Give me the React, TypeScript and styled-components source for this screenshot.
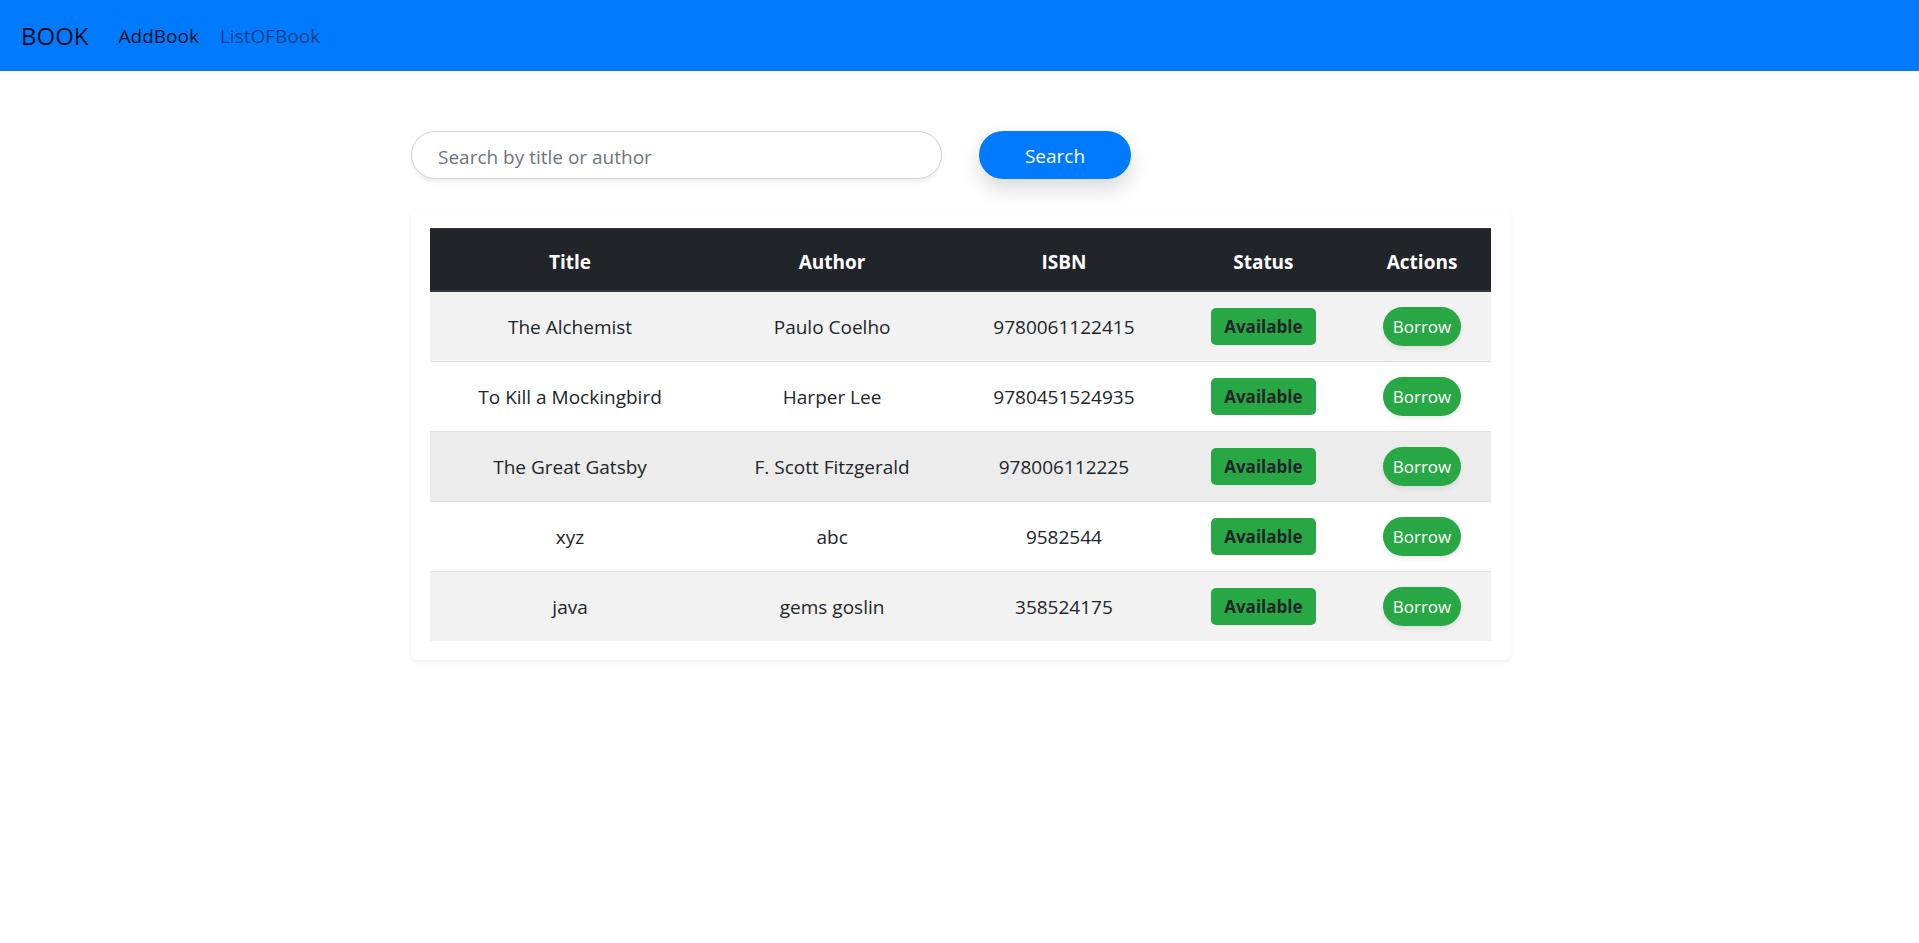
import React, { useState } from 'react';
import styled, { createGlobalStyle } from 'styled-components';

const GlobalStyle = createGlobalStyle`
  *, *::before, *::after { box-sizing: border-box; }
  body {
    margin: 0;
    background: #fff;
    color: #212529;
    font-family: 'Segoe UI', 'Open Sans', 'Noto Sans', sans-serif;
    font-size: 19px;
    line-height: 30px;
  }
  button, input { font: inherit; }
`;

const Navbar = styled.nav`
  display: flex;
  align-items: center;
  gap: 30px;
  height: 71px;
  padding: 0 21px;
  background: #007bff;
`;

const Brand = styled.a`
  color: rgba(0, 0, 0, 0.9);
  font-size: 24px;
  text-decoration: none;
`;

const NavLinks = styled.div`
  display: flex;
  gap: 21px;
`;

const NavLink = styled.a<{ $active?: boolean }>`
  color: rgba(0, 0, 0, ${({ $active }) => ($active ? 0.9 : 0.5)});
  text-decoration: none;
`;

const Container = styled.main`
  max-width: 1139px;
  margin: 0 auto;
  padding: 60px 19px 60px 21px;
`;

const SearchForm = styled.form`
  display: flex;
  gap: 37px;
  margin-bottom: 31px;
`;

const SearchInput = styled.input`
  flex: 0 1 531px;
  min-width: 0;
  height: 48px;
  padding: 4px 26px 0;
  border: 1px solid #ced4da;
  border-radius: 24px;
  background: #fff;
  box-shadow: 0 3px 5px rgba(0, 0, 0, 0.075);
  color: #495057;
  outline: none;

  &::placeholder {
    color: #6c757d;
    opacity: 1;
  }
`;

const SearchButton = styled.button`
  flex: 0 0 152px;
  height: 48px;
  padding: 2px 0 0;
  border: 0;
  border-radius: 24px;
  background: #007bff;
  box-shadow: 0 10px 20px rgba(0, 0, 0, 0.15);
  color: #fff;
  cursor: pointer;
`;

const Card = styled.section`
  padding: 18px 19px 19px;
  border-radius: 5px;
  background: #fff;
  box-shadow: 0 2px 5px rgba(0, 0, 0, 0.075);
`;

const BookTable = styled.table`
  width: 100%;
  table-layout: fixed;
  border-spacing: 0;
  text-align: center;
`;

const HeadCell = styled.th<{ $share: number }>`
  width: ${({ $share }) => $share}%;
  height: 64px;
  padding: 4px 0 0;
  border-top: 1px solid #32383e;
  border-bottom: 2px solid #32383e;
  background: #212529;
  color: #fff;
  font-weight: 700;
`;

const Row = styled.tr<{ $highlighted: boolean }>`
  color: #212529;

  &:nth-child(odd) {
    background: ${({ $highlighted }) => ($highlighted ? '#ececec' : '#f2f2f2')};
  }

  &:not(:last-child) td {
    height: 70px;
    border-bottom: 1px solid #dee2e6;
  }
`;

const Cell = styled.td`
  height: 69px;
  padding: 0;
  vertical-align: middle;
`;

const Badge = styled.span`
  display: inline-block;
  width: 105px;
  border-radius: 5px;
  background: #28a745;
  font-size: 17px;
  font-weight: 700;
  line-height: 37px;
  vertical-align: middle;
`;

const BorrowButton = styled.button`
  width: 78px;
  height: 39px;
  padding: 0;
  border: 0;
  border-radius: 20px;
  background: #28a745;
  box-shadow: 0 3px 5px rgba(0, 0, 0, 0.075);
  color: #fff;
  font-size: 17px;
  vertical-align: middle;
  cursor: pointer;
`;

const columns = [
  { label: 'Title', share: 26.4 },
  { label: 'Author', share: 23 },
  { label: 'ISBN', share: 20.7 },
  { label: 'Status', share: 16.9 },
  { label: 'Actions', share: 13 },
];

const books = [
  { title: 'The Alchemist', author: 'Paulo Coelho', isbn: '9780061122415' },
  { title: 'To Kill a Mockingbird', author: 'Harper Lee', isbn: '9780451524935' },
  { title: 'The Great Gatsby', author: 'F. Scott Fitzgerald', isbn: '978006112225' },
  { title: 'xyz', author: 'abc', isbn: '9582544' },
  { title: 'java', author: 'gems goslin', isbn: '358524175' },
];

export default function App() {
  const [query, setQuery] = useState('');
  const [activeRow, setActiveRow] = useState(2);

  return (
    <>
      <GlobalStyle />
      <Navbar>
        <Brand href="#">BOOK</Brand>
        <NavLinks>
          <NavLink href="#add" $active>AddBook</NavLink>
          <NavLink href="#list">ListOFBook</NavLink>
        </NavLinks>
      </Navbar>
      <Container>
        <SearchForm onSubmit={(event) => event.preventDefault()}>
          <SearchInput
            type="text"
            aria-label="Search by title or author"
            placeholder="Search by title or author"
            value={query}
            onChange={(event) => setQuery(event.target.value)}
          />
          <SearchButton type="submit">Search</SearchButton>
        </SearchForm>
        <Card>
          <BookTable>
            <thead>
              <tr>
                {columns.map(({ label, share }) => (
                  <HeadCell key={label} scope="col" $share={share}>{label}</HeadCell>
                ))}
              </tr>
            </thead>
            <tbody>
              {books.map((book, index) => (
                <Row
                  key={book.isbn}
                  $highlighted={index === activeRow}
                  onMouseEnter={() => setActiveRow(index)}
                >
                  <Cell>{book.title}</Cell>
                  <Cell>{book.author}</Cell>
                  <Cell>{book.isbn}</Cell>
                  <Cell><Badge>Available</Badge></Cell>
                  <Cell><BorrowButton type="button">Borrow</BorrowButton></Cell>
                </Row>
              ))}
            </tbody>
          </BookTable>
        </Card>
      </Container>
    </>
  );
}
